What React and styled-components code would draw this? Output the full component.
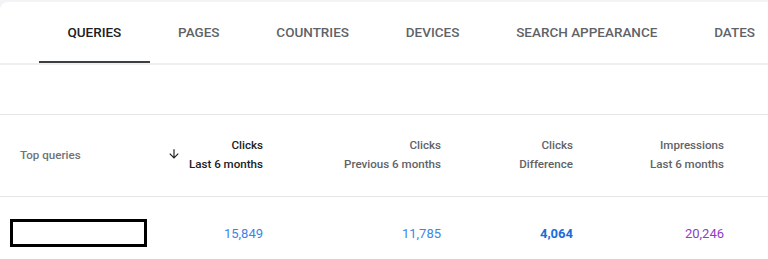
import React from "react";
import styled, { createGlobalStyle } from "styled-components";

const Global = createGlobalStyle`
  html, body { margin: 0; padding: 0; background: #f1f3f4; }
  body { font-family: Roboto, "Noto Sans", Arial, sans-serif; overflow: hidden; }
`;

const Card = styled.div`
  margin-top: 2px;
  background: #fff;
  border-top-left-radius: 8px;
  height: 257px;
`;

const TabBar = styled.div`
  display: flex;
  height: 61px;
  padding-left: 39px;
  border-bottom: 2px solid #eef0f1;
`;

const Tab = styled.div`
  display: flex;
  align-items: center;
  padding: 0 28.4px 2px;
  font-size: 13.5px;
  font-weight: 500;
  text-transform: uppercase;
  white-space: nowrap;
  color: ${(p) => (p.$active ? "#202124" : "#5f6368")};
  box-shadow: ${(p) => (p.$active ? "inset 0 -2px 0 #3c4043" : "none")};
`;

const Spacer = styled.div`
  height: 49px;
  border-bottom: 1px solid #e6e6e6;
`;

const Row = styled.div`
  display: grid;
  grid-template-columns: 160px 103px 178px 132px 151px;
  align-items: center;
  box-sizing: border-box;
  height: ${(p) => p.$h}px;
  padding-bottom: ${(p) => p.$pb}px;
  border-bottom: ${(p) => (p.$border ? "1px solid #e6e6e6" : "none")};
`;

const HeadLabel = styled.div`
  padding-left: 20px;
  font-size: 11.6px;
  font-weight: 500;
  color: #6f7377;
`;

const HeadCell = styled.div`
  display: flex;
  justify-content: flex-end;
  align-items: center;
  gap: 8px;
  font-size: 11.6px;
  font-weight: 500;
  line-height: 19px;
  text-align: right;
  color: ${(p) => (p.$active ? "#202124" : "#5f6368")};
`;

const Arrow = styled.svg`
  width: 14px;
  height: 14px;
  flex: none;
  margin-top: -2px;
`;

const Redacted = styled.div`
  margin-left: 10px;
  width: 131px;
  height: 22px;
  border: 3px solid #000;
  background: #fff;
`;

const Num = styled.div`
  text-align: right;
  font-size: 13px;
  font-weight: ${(p) => (p.$bold ? 700 : 400)};
  color: ${(p) => p.$color};
`;

const tabs = ["Queries", "Pages", "Countries", "Devices", "Search appearance", "Dates"];

const headers = [
  { top: "Clicks", bottom: "Last 6 months", active: true, arrow: true },
  { top: "Clicks", bottom: "Previous 6 months" },
  { top: "Clicks", bottom: "Difference" },
  { top: "Impressions", bottom: "Last 6 months" },
];

const values = [
  { v: "15,849", c: "#3d85e6" },
  { v: "11,785", c: "#3d85e6" },
  { v: "4,064", c: "#1a6dd9", b: true },
  { v: "20,246", c: "#8e3cc9" },
];

export default function App() {
  return (
    <>
      <Global />
      <Card>
        <TabBar>
          {tabs.map((t, i) => (
            <Tab key={t} $active={i === 0}>
              {t}
            </Tab>
          ))}
        </TabBar>
        <Spacer />
        <Row $h={82} $pb={2} $border>
          <HeadLabel>Top queries</HeadLabel>
          {headers.map((h, i) => (
            <HeadCell key={i} $active={h.active}>
              {h.arrow && (
                <Arrow viewBox="0 0 24 24">
                  <path d="M20 12l-1.41-1.41L13 16.17V4h-2v12.17l-5.58-5.59L4 12l8 8 8-8z" fill="#202124" />
                </Arrow>
              )}
              <div>
                {h.top}
                <br />
                {h.bottom}
              </div>
            </HeadCell>
          ))}
        </Row>
        <Row $h={72} $pb={0}>
          <div>
            <Redacted />
          </div>
          {values.map((v, i) => (
            <Num key={i} $color={v.c} $bold={v.b}>
              {v.v}
            </Num>
          ))}
        </Row>
      </Card>
    </>
  );
}
